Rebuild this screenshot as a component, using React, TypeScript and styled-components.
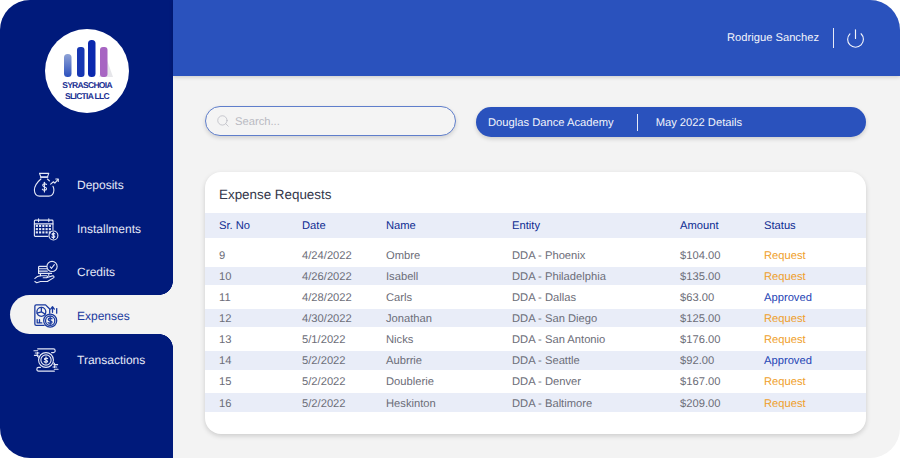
import React from 'react';
import styled, { createGlobalStyle } from 'styled-components';
import { Power, Search } from 'lucide-react';

const GlobalStyle = createGlobalStyle`
  html, body {
    margin: 0;
    padding: 0;
    background-color: #ffffff;
  }
  * {
    box-sizing: border-box;
  }
`;

const NAVY = '#001a7b';
const BLUE = '#2a52bd';
const PAGE = '#f3f3f3';

const Frame = styled.div`
  display: flex;
  width: 900px;
  height: 458px;
  border-radius: 30px;
  overflow: hidden;
  background-color: ${PAGE};
  font-family: "Liberation Sans", Arial, sans-serif;
  text-rendering: geometricPrecision;
`;

const Sidebar = styled.aside`
  flex: 0 0 173px;
  display: flex;
  flex-direction: column;
  padding-top: 29px;
  background-color: ${NAVY};
`;

const Logo = styled.div`
  width: 84px;
  height: 84px;
  margin-left: 45px;
  border-radius: 50%;
  background-color: #ffffff;
  display: flex;
  flex-direction: column;
  align-items: center;
  padding-top: 11px;
`;

const LogoText = styled.div`
  margin-top: 1.5px;
  color: #1a2f92;
  font-size: 8.5px;
  font-weight: 700;
  line-height: 11px;
  letter-spacing: -0.7px;
  text-align: center;
`;

const Nav = styled.nav`
  display: flex;
  flex-direction: column;
  gap: 4.67px;
  margin-top: 51.5px;
  margin-left: 10px;
`;

const NavItem = styled.div<{ $active?: boolean }>`
  position: relative;
  display: flex;
  align-items: center;
  height: 39px;
  padding: 2px 0 0 23px;
  border-radius: 20px 0 0 20px;
  font-size: 12px;
  color: ${(p) => (p.$active ? '#1a3a9f' : '#e4e8f6')};
  background-color: ${(p) => (p.$active ? PAGE : 'transparent')};

  ${(p) =>
    p.$active &&
    `
    &::before, &::after {
      content: '';
      position: absolute;
      right: 0;
      width: 14px;
      height: 14px;
    }
    &::before {
      top: -14px;
      background: radial-gradient(circle at 0 0, ${NAVY} 13.6px, ${PAGE} 14.2px);
    }
    &::after {
      bottom: -14px;
      background: radial-gradient(circle at 0 100%, ${NAVY} 13.6px, ${PAGE} 14.2px);
    }
  `}
`;

const NavIcon = styled.svg<{ $bold?: boolean }>`
  flex: 0 0 26px;
  width: 26px;
  height: 26px;
  margin-right: 18px;
  fill: none;
  stroke: currentColor;
  stroke-width: ${(p) => (p.$bold ? 1.4 : 1.2)};
  stroke-linecap: round;
  stroke-linejoin: round;
`;

const Main = styled.main`
  flex: 1;
  display: flex;
  flex-direction: column;
  min-width: 0;
`;

const Header = styled.header`
  flex: 0 0 76px;
  display: flex;
  align-items: center;
  justify-content: flex-end;
  padding: 0 34.5px 0 0;
  background-color: ${BLUE};
  box-shadow: 0 1px 4px rgba(0, 0, 0, 0.18);
  color: #f2f4fb;
`;

const UserName = styled.span`
  font-size: 11.2px;
`;

const HeaderDivider = styled.span`
  width: 1px;
  height: 20px;
  margin: 0 11px 0 13.5px;
  background-color: #e6eaf7;
`;

const Toolbar = styled.div`
  display: flex;
  gap: 20px;
  padding: 30px 34px 0 32px;
`;

const SearchBox = styled.label`
  flex: 0 0 251px;
  display: flex;
  align-items: center;
  height: 30px;
  padding-left: 10px;
  border: 1.5px solid #5f7ecb;
  border-radius: 15px;
  background-color: #f4f4f4;
  box-shadow: 0 2px 4px rgba(0, 0, 0, 0.14);
  color: #b9bac2;
`;

const SearchInput = styled.input`
  flex: 1;
  min-width: 0;
  margin-left: 5px;
  padding: 1px 0 0;
  border: none;
  outline: none;
  background: transparent;
  font-family: inherit;
  font-size: 11.2px;
  text-rendering: geometricPrecision;
  &::placeholder {
    color: #b9bac2;
    opacity: 1;
  }
`;

const Banner = styled.div`
  flex: 1;
  display: flex;
  align-items: center;
  height: 30px;
  margin-top: 1px;
  padding: 1px 0 0 12px;
  border-radius: 15px;
  background-color: ${BLUE};
  box-shadow: 0 2px 4px rgba(0, 0, 0, 0.16);
  color: #f2f4fb;
  font-size: 11.2px;
`;

const BannerDivider = styled.span`
  width: 1.5px;
  height: 17px;
  margin-left: 23px;
  margin-right: 17.5px;
  background-color: #e6eaf7;
`;

const Card = styled.section`
  height: 262px;
  margin: 35px 34px 0 32px;
  border-radius: 16px;
  background-color: #ffffff;
  box-shadow: 0 2px 5px rgba(0, 0, 0, 0.16);
  overflow: hidden;
`;

const CardTitle = styled.h2`
  height: 41px;
  margin: 0;
  padding: 14.5px 0 0 14px;
  color: #33364a;
  font-size: 13.4px;
  font-weight: 400;
  line-height: 16px;
`;

const Row = styled.div`
  display: grid;
  grid-template-columns: 83px 84px 126px 168px 84px 1fr;
  align-items: center;
  padding-left: 14px;
  font-size: 11.2px;
`;

const HeadRow = styled(Row)`
  height: 25px;
  margin-bottom: 5px;
  background-color: #e9edf8;
  color: #0e2c92;
`;

const DataRow = styled(Row)`
  height: 23.8px;
  padding-top: 2px;
  color: #6c6d78;
  &:nth-child(even) {
    height: 18.4px;
    background-color: #e9edf8;
  }
`;

const Status = styled.span<{ $approved: boolean }>`
  color: ${(p) => (p.$approved ? '#1f45b5' : '#ef9f2c')};
`;

const columns = ['Sr. No', 'Date', 'Name', 'Entity', 'Amount', 'Status'];

const expenses = [
  { no: 9, date: '4/24/2022', name: 'Ombre', entity: 'DDA - Phoenix', amount: '$104.00', status: 'Request' },
  { no: 10, date: '4/26/2022', name: 'Isabell', entity: 'DDA - Philadelphia', amount: '$135.00', status: 'Request' },
  { no: 11, date: '4/28/2022', name: 'Carls', entity: 'DDA - Dallas', amount: '$63.00', status: 'Approved' },
  { no: 12, date: '4/30/2022', name: 'Jonathan', entity: 'DDA - San Diego', amount: '$125.00', status: 'Request' },
  { no: 13, date: '5/1/2022', name: 'Nicks', entity: 'DDA - San Antonio', amount: '$176.00', status: 'Request' },
  { no: 14, date: '5/2/2022', name: 'Aubrrie', entity: 'DDA - Seattle', amount: '$92.00', status: 'Approved' },
  { no: 15, date: '5/2/2022', name: 'Doublerie', entity: 'DDA - Denver', amount: '$167.00', status: 'Request' },
  { no: 16, date: '5/2/2022', name: 'Heskinton', entity: 'DDA - Baltimore', amount: '$209.00', status: 'Request' },
];

function LogoBars() {
  return (
    <svg width="52" height="38" viewBox="0 0 52 38">
      <defs>
        <linearGradient id="paleBar" x1="0" y1="0" x2="0" y2="1">
          <stop offset="0" stopColor="#8fa3d6" />
          <stop offset="1" stopColor="#2c50bd" />
        </linearGradient>
      </defs>
      <path d="M38 37 L46 20 L52 37 Z" fill="#e6e6ea" />
      <rect x="3" y="14" width="7.5" height="23" rx="3.5" fill="url(#paleBar)" />
      <rect x="16" y="7" width="7.5" height="30" rx="3" fill="#1636b2" />
      <rect x="27" y="0" width="7.5" height="37" rx="3.5" fill="#0a28ae" />
      <rect x="39" y="7" width="7.5" height="30" rx="3" fill="#a765c2" />
    </svg>
  );
}

function DepositIcon() {
  return (
    <NavIcon viewBox="0 0 28 28">
      <path d="M7 1.500h10l-1.500 4h-7z" />
      <path d="M8 5.500h8" />
      <path d="M8.500 7.500C5 10.500 1.500 15 1.500 19.500c0 4 2.500 6.500 5.500 6.500h10c3 0 5.500-2.500 5.500-6.500 0-1.500-.4-3-1-4.200" />
      <path d="M15.500 7.500c.8.600 1.500 1.200 2.200 2" />
      <path d="M14.500 13.500c-.6-1-3.800-1.200-4.100.7-.3 2.300 4.300 1.500 4.200 3.800-.1 2-3.700 1.800-4.500.5" />
      <path d="M12.300 11v10.500" />
      <path d="M19 13l3-2.500 1.500 1.500 3.500-4" />
      <path d="M24.500 7.500h2.700v2.700" />
    </NavIcon>
  );
}

function InstallmentIcon() {
  return (
    <NavIcon viewBox="0 0 28 28">
      <path d="M16 22H2.500a1 1 0 0 1-1-1V5.500a1 1 0 0 1 1-1h18a1 1 0 0 1 1 1V15" />
      <path d="M1.500 8.500h20" />
      <path d="M6 3v3M17 3v3" />
      <g fill="currentColor" stroke="none">
        {[4, 7.5, 11, 14.5, 18].map((x) =>
          [10.5, 14, 17.5].map((y) => <rect key={`${x}-${y}`} x={x - 1} y={y - 1} width="2.300" height="2.300" />)
        )}
      </g>
      <circle cx="22" cy="21" r="4.800" />
      <path d="M23.500 19.300c-.5-.8-2.900-.8-3 .5-.1 1.600 3.100 1 3 2.500-.1 1.200-2.600 1.100-3.200.2M22 17.800v6.400" />
    </NavIcon>
  );
}

function CreditIcon() {
  return (
    <NavIcon viewBox="0 0 28 28">
      <circle cx="20.500" cy="8" r="5.500" />
      <path d="M18.500 8.500l1.500 1.500 3-4" />
      <path d="M14.500 8H7a1 1 0 0 0-1 1v1.500h9" />
      <path d="M6 10.500V13h9.500M6 13v2.500h14" />
      <path d="M8 18v-2.500M17 18v-2.500" />
      <path d="M2 21c2-2.500 4-3 6.500-3h6c1.500 0 1.500 2.200 0 2.200H11" />
      <path d="M15 20l6-1.800c1.500-.4 2.300 1.200 1 2.100l-6.500 4H8L4 25.500l-2-1.300" />
    </NavIcon>
  );
}

function ExpenseIcon() {
  return (
    <NavIcon viewBox="0 0 28 28" $bold>
      <path d="M12 24H3.500a1.500 1.500 0 0 1-1.500-1.500v-19A1.500 1.500 0 0 1 3.500 2h10L18 6.500V11" />
      <circle cx="9" cy="9.500" r="4.800" />
      <path d="M9 4.700v4.800l4 2.500M9 9.500l-4.500 1.500" />
      <path d="M4.500 18v3.500h5M7 21v-3" />
      <circle cx="18.500" cy="19" r="7" />
      <circle cx="18.500" cy="19" r="5" />
      <path d="M20.500 17c-.7-1-3.800-1-4 .7-.1 2 4.100 1.300 4 3.100-.1 1.600-3.400 1.400-4.200.3M18.500 15v8" />
      <path d="M21 10V4.500M19 6.500l2-2.500 2 2.500" />
      <path d="M25.500 11V6" />
    </NavIcon>
  );
}

function TransactionIcon() {
  return (
    <NavIcon viewBox="0 0 28 28">
      <path d="M5 2h17c2.500 0 2.500 4 0 4h-2" />
      <path d="M1 4h4M2.500 6.500h4M1.500 9h4" />
      <circle cx="14" cy="14" r="8" />
      <circle cx="14" cy="14" r="5.500" />
      <path d="M15.800 12.500c-.5-.8-3.400-.8-3.600.5-.1 1.600 3.700 1 3.600 2.500-.1 1.200-3.100 1.100-3.700.2M14 10.500v7" />
      <path d="M23 26H6c-2.500 0-2.500-4 0-4h2" />
      <path d="M23 24h4M21.500 21.500h4M22.500 19h4" />
      <path d="M5 6c-1 2.500-1 4 1 5M23 22c1-2.500 1-4-1-5" />
    </NavIcon>
  );
}

const navItems = [
  { label: 'Deposits', icon: <DepositIcon /> },
  { label: 'Installments', icon: <InstallmentIcon /> },
  { label: 'Credits', icon: <CreditIcon /> },
  { label: 'Expenses', icon: <ExpenseIcon />, active: true },
  { label: 'Transactions', icon: <TransactionIcon /> },
];

export default function App() {
  return (
    <>
      <GlobalStyle />
      <Frame>
        <Sidebar>
          <Logo>
            <LogoBars />
            <LogoText>
              SYRASCHOIA
              <br />
              SLICTIA LLC
            </LogoText>
          </Logo>
          <Nav>
            {navItems.map((item) => (
              <NavItem key={item.label} $active={item.active}>
                {item.icon}
                {item.label}
              </NavItem>
            ))}
          </Nav>
        </Sidebar>
        <Main>
          <Header>
            <UserName>Rodrigue Sanchez</UserName>
            <HeaderDivider />
            <Power size={21} strokeWidth={1.3} />
          </Header>
          <Toolbar>
            <SearchBox>
              <Search size={14} strokeWidth={1.3} />
              <SearchInput placeholder="Search..." />
            </SearchBox>
            <Banner>
              Douglas Dance Academy
              <BannerDivider />
              May 2022 Details
            </Banner>
          </Toolbar>
          <Card>
            <CardTitle>Expense Requests</CardTitle>
            <HeadRow>
              {columns.map((col) => (
                <span key={col}>{col}</span>
              ))}
            </HeadRow>
            <div>
              {expenses.map((row) => (
                <DataRow key={row.no}>
                  <span>{row.no}</span>
                  <span>{row.date}</span>
                  <span>{row.name}</span>
                  <span>{row.entity}</span>
                  <span>{row.amount}</span>
                  <Status $approved={row.status === 'Approved'}>{row.status}</Status>
                </DataRow>
              ))}
            </div>
          </Card>
        </Main>
      </Frame>
    </>
  );
}
